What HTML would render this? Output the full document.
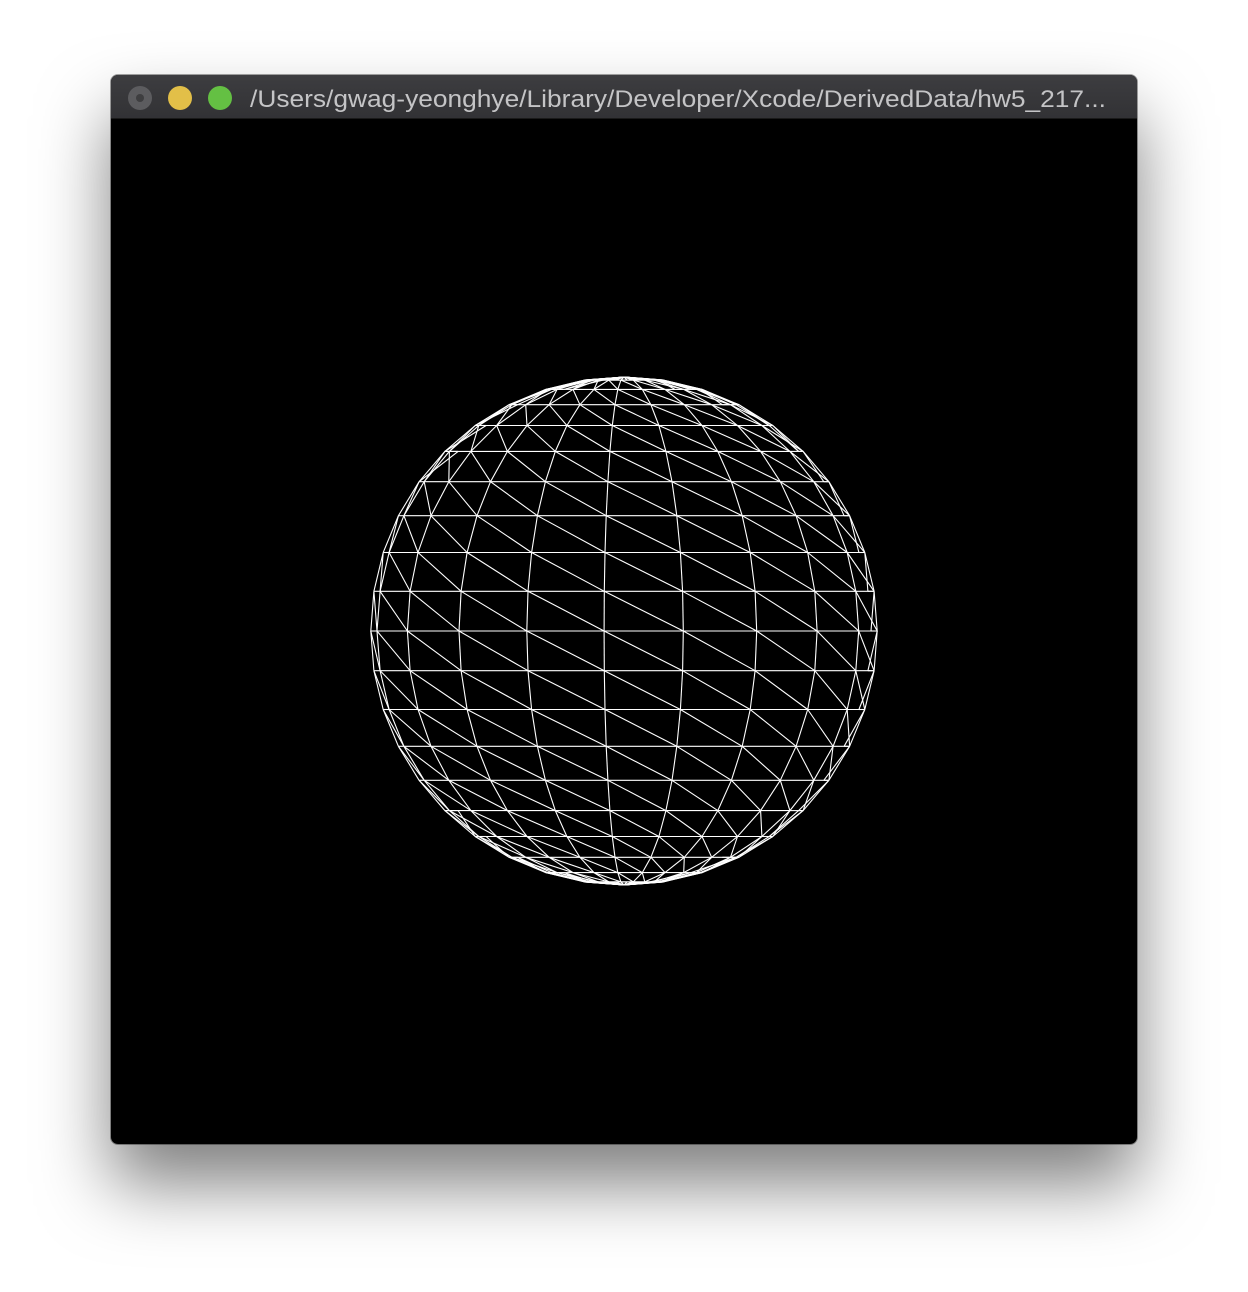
<!DOCTYPE html>
<html><head><meta charset="utf-8"><style>
html,body{margin:0;padding:0;background:#fff;width:1248px;height:1292px;overflow:hidden}
.win{position:absolute;left:111px;top:75px;width:1026px;height:1069px;border-radius:7px;background:#000;box-shadow:0 40px 70px rgba(0,0,0,0.5),0 0 0 1px rgba(0,0,0,0.35);overflow:hidden}
.bar{position:absolute;left:0;top:0;width:100%;height:43px;background:linear-gradient(#3d3d40,#323235);border-bottom:1px solid #1a1a1a}
.dot{position:absolute;top:11px;width:24px;height:24px;border-radius:50%}
svg{position:absolute;left:0;top:0}
</style></head><body>
<div class="win">
<div class="bar">
<div class="dot" style="left:17px;background:#5c5c5f"><div style="position:absolute;left:8px;top:8px;width:8px;height:8px;border-radius:50%;background:#3e3e40"></div></div>
<div class="dot" style="left:57px;background:#e2bf48"></div>
<div class="dot" style="left:97px;background:#64c043"></div>
<svg width="1026" height="43"><text x="139" y="32" font-family="Liberation Sans, sans-serif" font-size="24" fill="#c4c4c6" textLength="856" lengthAdjust="spacingAndGlyphs">/Users/gwag-yeonghye/Library/Developer/Xcode/DerivedData/hw5_217...</text></svg>
</div>
</div>
<svg id="s" width="1248" height="1292"></svg>
<script>
var cx=624,cy=631,R=254,N=20,M=20,off=-4.5*Math.PI/180,out=[];
function P(i,j){var lat=Math.PI/2-i*Math.PI/N,lon=j*2*Math.PI/M+off;
return [cx+R*Math.cos(lat)*Math.sin(lon),cy-R*Math.sin(lat),Math.cos(lat)*Math.cos(lon)];}
function L(a,b){if(a[2]+b[2]<-0.35)return;out.push('<line x1="'+a[0].toFixed(1)+'" y1="'+a[1].toFixed(1)+'" x2="'+b[0].toFixed(1)+'" y2="'+b[1].toFixed(1)+'"/>');}
for(var i=0;i<N;i++)for(var j=0;j<M;j++){var a=P(i,j),b=P(i,j+1),c=P(i+1,j),d=P(i+1,j+1);
L(a,b);L(a,c);L(a,d);}
document.getElementById('s').innerHTML='<g stroke="#fff" stroke-width="1.1" fill="none">'+out.join('')+'</g>';
</script>
</body></html>
